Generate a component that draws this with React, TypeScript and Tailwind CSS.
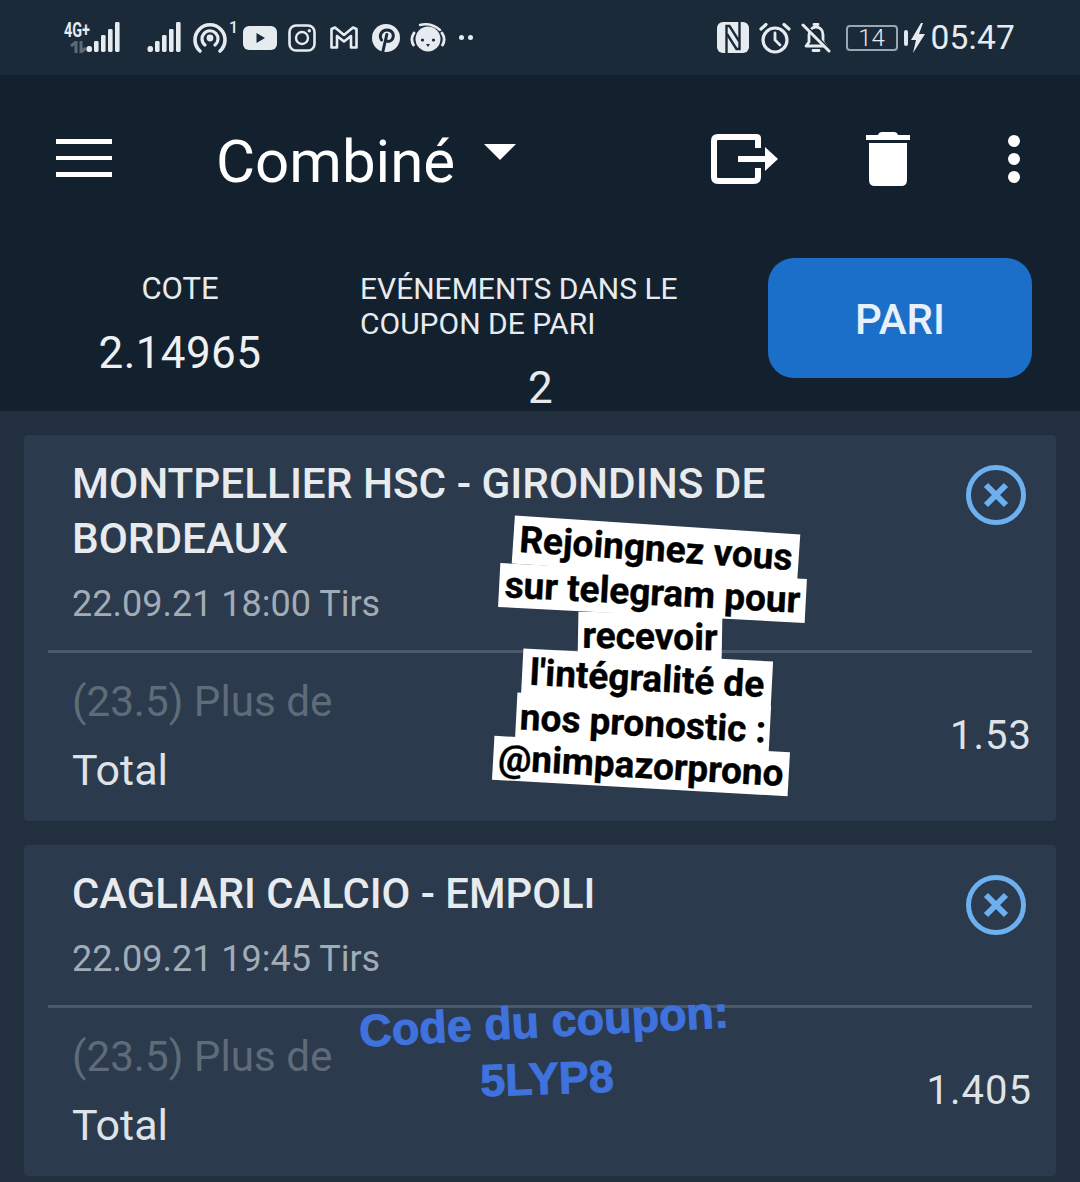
import React from "react";

const roboto = { fontFamily: "Roboto, sans-serif" };

function SignalBars() {
  return (
    <svg width="36" height="32" viewBox="0 0 36 32" fill="#e6ebf0">
      <rect x="0.5" y="24" width="5.5" height="6" rx="2.5" />
      <rect x="8" y="19" width="4.6" height="11" rx="1.4" />
      <rect x="15" y="13" width="4.6" height="17" rx="1.4" />
      <rect x="22" y="7" width="4.6" height="23" rx="1.4" />
      <rect x="29" y="0" width="4.6" height="30" rx="1.4" />
    </svg>
  );
}

function StatusLeft() {
  return (
    <div className="flex items-center text-[#e6ebf0]">
      <div className="relative w-[56px] h-[32px] ml-[64px]">
        <span className="absolute left-0 top-[-3px] text-[20px] leading-[22px] font-bold whitespace-nowrap" style={{ fontFamily: "Roboto, sans-serif", transform: "scaleX(0.72)", transformOrigin: "left" }}>4G+</span>
        <svg className="absolute left-[6px] top-[19px]" width="18" height="12" viewBox="0 0 18 12" fill="none" stroke="#5d6a77" strokeWidth="3">
          <path d="M6 12 V1 L1 5" />
          <path d="M11 0 V11 L16 7" />
        </svg>
        <div className="absolute left-[22px] top-0">
          <SignalBars />
        </div>
      </div>
      <div className="ml-[27px] mt-[1px]">
        <SignalBars />
      </div>
      <div className="relative ml-[9px] w-[52px] h-[36px]">
        <svg width="36" height="36" viewBox="0 0 36 36" fill="none" stroke="#e6ebf0" strokeLinecap="round">
          <path d="M8 31 A15 15 0 1 1 28 31" strokeWidth="3.6" />
          <path d="M13 25 A8 8 0 1 1 23 25" strokeWidth="3.2" />
          <circle cx="18" cy="18" r="3.4" fill="#e6ebf0" stroke="none" />
        </svg>
        <span className="absolute left-[37px] top-[0px] text-[16px] leading-[16px] font-medium" style={roboto}>1</span>
      </div>
      <svg className="ml-[-1px]" width="34" height="26" viewBox="0 0 34 26">
        <rect x="0" y="1" width="34" height="24" rx="6" fill="#e6ebf0" />
        <path d="M13.5 8 L22 13 L13.5 18 Z" fill="#1a2a39" />
      </svg>
      <svg className="ml-[11px]" width="28" height="28" viewBox="0 0 28 28" fill="none" stroke="#e6ebf0">
        <rect x="1.5" y="1.5" width="25" height="25" rx="6.5" strokeWidth="2.6" />
        <circle cx="14" cy="14" r="6" strokeWidth="2.4" />
        <circle cx="21.3" cy="6.7" r="1.7" fill="#e6ebf0" stroke="none" />
      </svg>
      <svg className="ml-[14px]" width="28" height="24" viewBox="0 0 28 24" fill="none" stroke="#e6ebf0" strokeWidth="2.6" strokeLinejoin="round">
        <path d="M1.5 3 L5 1.5 L14 9 L23 1.5 L26.5 3 V21.5 H21 V10 L14 15.5 L7 10 V21.5 H1.5 Z" />
      </svg>
      <svg className="ml-[14px]" width="28" height="28" viewBox="0 0 28 28">
        <circle cx="14" cy="14" r="14" fill="#e6ebf0" />
        <path d="M9.5 16 C6.5 11 10 6 15 6 C20 6 22 10 21 13.5 C20 17.5 15.5 18.5 13.8 16 M14.8 10.5 L11 27" fill="none" stroke="#1a2a39" strokeWidth="3" strokeLinecap="round" />
      </svg>
      <svg className="ml-[10px]" width="36" height="30" viewBox="0 0 36 30">
        <circle cx="18" cy="16" r="12.5" fill="#e6ebf0" />
        <path d="M3.5 22 Q0 16 4 10 M32.5 22 Q36 16 32 10" stroke="#e6ebf0" strokeWidth="2.8" fill="none" strokeLinecap="round" />
        <path d="M10 2 Q21 -1 30 7" stroke="#e6ebf0" strokeWidth="2.4" fill="none" strokeLinecap="round" />
        <circle cx="12.5" cy="17" r="1.6" fill="#1a2a39" />
        <circle cx="23.5" cy="17" r="1.6" fill="#1a2a39" />
        <path d="M16 21 H20 L18 24 Z" fill="#1a2a39" />
      </svg>
      <div className="ml-[13px] flex gap-[4px]">
        <div className="w-[5px] h-[5px] rounded-full bg-[#e6ebf0]" />
        <div className="w-[5px] h-[5px] rounded-full bg-[#e6ebf0]" />
      </div>
    </div>
  );
}

function StatusRight() {
  return (
    <div className="flex items-center text-[#e6ebf0]">
      <svg width="32" height="31" viewBox="0 0 32 31">
        <rect x="0" y="0" width="32" height="31" rx="6" fill="#e6ebf0" />
        <path d="M9.5 31 V4 H12.5 L22 19" stroke="#1a2a39" strokeWidth="2.4" fill="none" />
        <path d="M22.5 0 V27 H19.5 L10 12" stroke="#1a2a39" strokeWidth="2.4" fill="none" />
      </svg>
      <svg className="ml-[10px]" width="32" height="32" viewBox="0 0 32 32" fill="none" stroke="#e6ebf0" strokeLinecap="round">
        <circle cx="16" cy="18" r="12" strokeWidth="3.2" />
        <path d="M16 11 V18 L21 23" strokeWidth="2.8" />
        <path d="M2 7 L7 2.5 M30 7 L25 2.5" strokeWidth="3.2" />
      </svg>
      <svg className="ml-[10px]" width="30" height="32" viewBox="0 0 30 32" fill="none" stroke="#e6ebf0" strokeLinecap="round" strokeLinejoin="round">
        <path d="M5 24 L8 20 V13 C8 8 11 5 15 5 C19 5 22 8 22 13 V20 L25 24 Z" strokeWidth="2.8" />
        <path d="M13 2.5 H17 M12 28.5 H18" strokeWidth="2.8" />
        <path d="M2 3 L28 29" strokeWidth="3" stroke="#1a2a39" transform="translate(2,0)" />
        <path d="M2 3 L28 29" strokeWidth="3" />
      </svg>
      <div className="ml-[15px] w-[52px] h-[26px] border-2 border-[#9aa6b2] rounded-[4px] flex items-center justify-center text-[24px] leading-none font-light" style={roboto}>14</div>
      <div className="ml-[6px] w-[4px] h-[16px] rounded-sm bg-[#dfe5ea]" />
      <svg className="ml-[3px]" width="14" height="30" viewBox="0 0 14 30" fill="#e6ebf0">
        <path d="M10 0 L0 17 H5 L2 30 L14 11 H8 L12 0 Z" />
      </svg>
      <span className="ml-[6px] text-[33.5px] leading-[40px] tracking-[0.2px]" style={roboto}>05:47</span>
    </div>
  );
}

function Close() {
  return (
    <svg width="60" height="60" viewBox="0 0 60 60" fill="none" stroke="#6db0f0">
      <circle cx="30" cy="30" r="27.5" strokeWidth="5" />
      <path d="M20 20 L40 40 M40 20 L20 40" strokeWidth="6" />
    </svg>
  );
}

function Card({ title, meta, odd, hClass, titleClass }: { title: string[]; meta: string; odd: string; hClass: string; titleClass: string }) {
  return (
    <div className={`bg-[#2b3a4c] rounded-[4px] mx-[24px] flex flex-col ${hClass}`}>
      <div className="flex justify-between pl-[48px] pr-[30px] pt-[21px]">
        <div>
          {title.map((t) => (
            <div key={t} className={`leading-[55px] font-medium text-[#e8ebee] ${titleClass}`}>{t}</div>
          ))}
          <div className="text-[36px] leading-[40px] mt-[18px] text-[#a2acb6]">{meta}</div>
        </div>
        <div className="mt-[9px] shrink-0"><Close /></div>
      </div>
      <div className="h-[3px] mx-[24px] bg-[#4b5968] mt-[26px]" />
      <div className="flex justify-between items-center pl-[48px] pr-[24px] pt-[24px]">
        <div>
          <div className="text-[42.2px] leading-[50px] text-[#5f6b78]">(23.5) Plus de</div>
          <div className="text-[43px] leading-[50px] mt-[18px] text-[#dfe3e7]">Total</div>
        </div>
        <div className="text-[40px] leading-[50px] text-[#dfe3e7] tracking-[1px] mt-[-1px]">{odd}</div>
      </div>
    </div>
  );
}

const stickerLines: { t: string; left: number; top: number; rot: number; w: number; h: number }[] = [
  { t: "Rejoingnez vous", left: 513, top: 525, rot: 3.8, w: 286, h: 48 },
  { t: "sur telegram pour", left: 499, top: 571, rot: 3, w: 307, h: 44 },
  { t: "recevoir", left: 578, top: 613, rot: 1, w: 144, h: 48 },
  { t: "l'intégralité de", left: 522, top: 655, rot: 3, w: 250, h: 48 },
  { t: "nos pronostic :", left: 516, top: 699, rot: 3, w: 254, h: 49 },
  { t: "@nimpazorprono", left: 493, top: 744, rot: 3.2, w: 296, h: 44 },
];

export default function App() {
  return (
    <div className="w-[1080px] h-[1182px] overflow-hidden bg-[#222f3e] relative" style={roboto}>
      <div className="h-[75px] bg-[#1a2a39] flex items-center justify-between pr-[65px]">
        <StatusLeft />
        <StatusRight />
      </div>
      <div className="h-[336px] bg-[#13212e] flex flex-col">
        <div className="h-[170px] flex items-center pl-[56px] pr-[60px]">
          <div className="flex flex-col gap-[12px] w-[56px] mt-[-4px]">
            <div className="h-[4.5px] bg-white" />
            <div className="h-[4.5px] bg-white" />
            <div className="h-[4.5px] bg-white" />
          </div>
          <div className="ml-[104px] text-[60px] leading-[70px] text-white mt-[4px]">Combiné</div>
          <svg className="ml-[29px] mt-[-16px]" width="32" height="16" viewBox="0 0 32 16" fill="white"><path d="M0 0 H32 L16 16 Z" /></svg>
          <div className="ml-auto flex items-center mt-[-2px]">
            <svg width="68" height="50" viewBox="0 0 68 50" fill="none" stroke="white">
              <path d="M47 14 V4 Q47 3 45 3 H7 Q3 3 3 7 V43 Q3 47 7 47 H43 Q47 47 47 43 V34" strokeWidth="6" />
              <path d="M27 25 H56" strokeWidth="6" />
              <path d="M54 13 L67 25 L54 37 Z" fill="white" stroke="none" />
            </svg>
            <svg className="ml-[87px]" width="44" height="56" viewBox="0 0 44 56" fill="white">
              <path d="M12 4 Q13 1 16 1 H28 Q31 1 32 4 L44 4 V9 H0 V4 Z" />
              <path d="M3 12 H41 V49 Q41 55 35 55 H9 Q3 55 3 49 Z" />
            </svg>
            <div className="ml-[98px] flex flex-col gap-[6px]">
              <div className="w-[12px] h-[12px] rounded-full bg-white" />
              <div className="w-[12px] h-[12px] rounded-full bg-white" />
              <div className="w-[12px] h-[12px] rounded-full bg-white" />
            </div>
          </div>
        </div>
        <div className="flex pl-[48px] pr-[48px] items-start">
          <div className="w-[264px] flex flex-col items-center text-[#e8ebee] mt-[26px]">
            <div className="text-[31px] leading-[36px]">COTE</div>
            <div className="text-[44px] leading-[52px] mt-[20px] tracking-[0.4px] text-[#eef0f2]">2.14965</div>
          </div>
          <div className="ml-[48px] w-[360px] mt-[26px] text-[#e8ebee]">
            <div className="text-[30px] leading-[35px] whitespace-pre-line">{"EVÉNEMENTS DANS LE\nCOUPON DE PARI"}</div>
            <div className="text-[44px] leading-[44px] mt-[25px] pl-[168px]">2</div>
          </div>
          <div className="ml-auto mt-[13px] w-[264px] h-[120px] rounded-[26px] bg-[#1b6fc9] flex items-center justify-center text-[42px] font-medium text-[#e8f1fb] pt-[2px]">PARI</div>
        </div>
      </div>
      <div className="flex flex-col gap-[24px] pt-[24px]">
        <Card title={["MONTPELLIER HSC - GIRONDINS DE", "BORDEAUX"]} meta="22.09.21 18:00 Tirs" odd="1.53" hClass="h-[386px]" titleClass="text-[42.3px]" />
        <Card title={["CAGLIARI CALCIO - EMPOLI"]} meta="22.09.21 19:45 Tirs" odd="1.405" hClass="h-[331px]" titleClass="text-[41.8px]" />
      </div>
      {stickerLines.map((l) => (
        <div
          key={l.t + "-bg"}
          className="absolute bg-white"
          style={{ left: l.left, top: l.top, width: l.w, height: l.h, transform: `rotate(${l.rot}deg)` }}
        />
      ))}
      {stickerLines.map((l) => (
        <div
          key={l.t}
          className="absolute text-black font-bold text-[37px] whitespace-nowrap flex items-center justify-center [-webkit-text-stroke:0.4px_black]"
          style={{ left: l.left, top: l.top, width: l.w, height: l.h, transform: `rotate(${l.rot}deg)` }}
        >
          {l.t}
        </div>
      ))}
      <div className="absolute left-[358px] top-[995px] w-[372px] text-center font-bold text-[#3f72dc] text-[45px] leading-[54px] whitespace-nowrap [-webkit-text-stroke:1px_#3f72dc]" style={{ transform: "rotate(-3deg)", fontFamily: '"Liberation Sans", sans-serif' }}>
        Code du coupon:
      </div>
      <div className="absolute left-[461px] top-[1052px] w-[172px] text-center font-bold text-[#3f72dc] text-[45px] leading-[54px] [-webkit-text-stroke:1px_#3f72dc]" style={{ transform: "rotate(-2deg)", fontFamily: '"Liberation Sans", sans-serif' }}>
        5LYP8
      </div>
    </div>
  );
}
